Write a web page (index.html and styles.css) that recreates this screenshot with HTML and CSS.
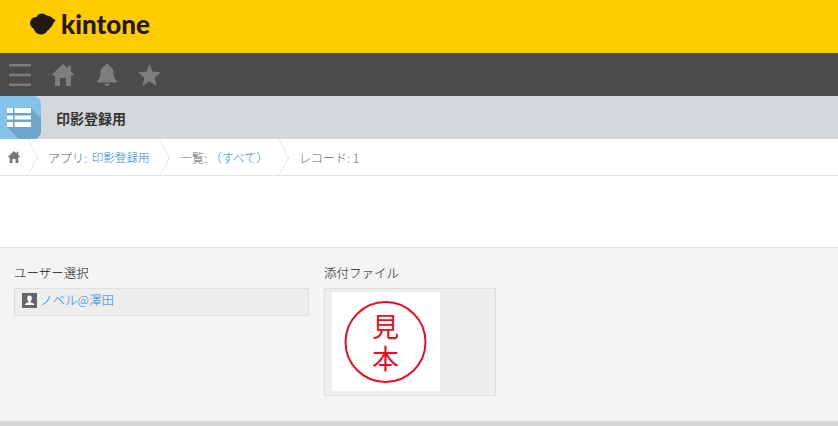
FILE: index.html
```html
<!DOCTYPE html>
<html lang="ja">
<head>
<meta charset="utf-8">
<title>印影登録用</title>
<link rel="stylesheet" href="styles.css">
</head>
<body>
<header class="brand">
  <svg class="cloud" width="26" height="22" viewBox="0 0 26 22"><g fill="#231815"><circle cx="6" cy="10" r="6"/><circle cx="12" cy="7" r="6.500"/><circle cx="17" cy="9" r="6.500"/><circle cx="11" cy="14" r="7.500"/><circle cx="15" cy="12" r="6"/><path d="M20 4l5.500 3-.5 1.500-5 3z"/></g></svg>
  <span class="wordmark">kintone</span>
</header>
<nav class="globalbar">
  <svg width="22" height="22" viewBox="0 0 22 22"><path fill="#7d7d7d" d="M0 0h22v2.500H0zM0 9.700h22v2.500H0zM0 19.500h22V22H0z"/></svg>
  <svg class="home" width="22" height="22" viewBox="0 0 22 22"><path fill="#7d7d7d" d="M11 0l5 4.600V1.500h3v6l3 3-1.200 1.200H19V22h-5v-8H8v8H3V11.700H1.200L0 10.500z"/></svg>
  <svg class="bell" width="22" height="22" viewBox="0 0 22 22"><path fill="#7d7d7d" d="M11 0c1 0 1.700.7 1.700 1.700 3.300.8 4.800 3.300 4.800 6.800 0 4 1 6.500 3.500 8.500v1.500H1V17c2.500-2 3.500-4.500 3.500-8.500 0-3.500 1.500-6 4.800-6.800C9.300.7 10 0 11 0zM8.500 19.700h5C13.500 21 12.400 22 11 22s-2.500-1-2.500-2.300z"/></svg>
  <svg class="star" width="23" height="22" viewBox="0 0 23 22"><path fill="#7d7d7d" d="M11.500 0l3.100 7.600 8.400.7-6.400 5.400 2 8.300-7.100-4.500L4.400 22l2-8.300L0 8.300l8.400-.7z"/></svg>
</nav>
<section class="apptitle">
  <div class="appicon">
    <svg width="41" height="43" viewBox="0 0 41 43">
      <path fill="#6fa4cb" d="M7 31V12h24l10 10v21H19z"/>
      <path fill="#fff" d="M7 12h6v5H7zM14.500 12H31v5H14.500zM7 19.500h6v4H7zM14.500 19.500H31v4H14.500zM7 26h6v5H7zM14.500 26H31v5H14.500z"/>
    </svg>
  </div>
  <h1 class="appname">印影登録用</h1>
</section>
<div class="crumbs">
  <a class="crumb crumb-home"><svg width="12" height="12" viewBox="0 0 12 12"><path fill="#777" d="M6 0l2.700 2.500V.8h1.600v3.300L12 5.800l-.7.7h-1V12H7.500V8h-3v4H1.700V6.500h-1L0 5.800z"/></svg></a>
  <span class="crumb">アプリ: <span class="link">印影登録用</span></span>
  <span class="crumb">一覧: <span class="link">（すべて）</span></span>
  <span class="crumb crumb-last">レコード: 1</span>
</div>
<div class="toolbar"></div>
<main class="record">
  <div class="field field-user">
    <div class="label">ユーザー選択</div>
    <div class="value value-user">
      <span class="avatar"><svg width="15" height="15" viewBox="0 0 15 15"><path fill="#666" d="M0 0h15v15H0z"/><path fill="#fff" d="M7.500 2.500c1.500 0 2.300 1.100 2.300 2.700 0 1.300-.6 2.300-1.200 2.900v1.200c1 .6 2.800.8 3.400 1.700v1H3v-1c.6-.9 2.400-1.100 3.400-1.700V8.100c-.6-.6-1.200-1.600-1.200-2.900 0-1.600.8-2.700 2.300-2.700z"/></svg></span>
      <span class="link">ノベル@澤田</span>
    </div>
  </div>
  <div class="field field-file">
    <div class="label">添付ファイル</div>
    <div class="value value-file">
      <div class="thumb">
        <svg width="108" height="99" viewBox="0 0 108 99">
          <circle cx="53.500" cy="50" r="40" fill="none" stroke="#e60f25" stroke-width="2"/>
          <text class="seal" x="53.500" y="45" text-anchor="middle">見</text>
          <text class="seal" x="53.500" y="77" text-anchor="middle">本</text>
        </svg>
      </div>
    </div>
  </div>
</main>
<footer class="bottomstrip"></footer>
</body>
</html>
```
FILE: styles.css
```css
* { box-sizing: border-box; }
html, body { margin: 0; padding: 0; }
body {
  width: 838px;
  height: 426px;
  overflow: hidden;
  display: flex;
  flex-direction: column;
  font-family: "Noto Sans CJK JP", "Liberation Sans", sans-serif;
  font-size: 12px;
  font-weight: 300;
  color: #222;
  background: #fff;
}
.brand {
  height: 53px;
  flex: none;
  background: #ffcc00;
  display: flex;
  align-items: center;
  gap: 5px;
  padding: 0 0 5px 30px;
}
.wordmark {
  font-family: Lato, sans-serif;
  font-weight: 900;
  font-size: 26px;
  line-height: 30px;
  color: #231815;
}
.globalbar {
  height: 43px;
  flex: none;
  background: #4b4b4b;
  display: flex;
  align-items: center;
  padding-left: 9px;
}
.globalbar .home { margin-left: 21px; }
.globalbar .bell { margin-left: 22px; }
.globalbar .star { margin-left: 20px; }
.apptitle {
  height: 43px;
  flex: none;
  background: #d4d8da;
  display: flex;
  align-items: center;
}
.appicon {
  width: 41px;
  height: 43px;
  background: #83c3ea;
  border-radius: 0 8px 8px 0;
  overflow: hidden;
}
.appicon svg { display: block; }
.appname {
  margin: 0 0 0 15px;
  font-size: 14px;
  font-weight: 700;
  color: #333;
}
.crumbs {
  height: 37px;
  flex: none;
  display: flex;
  align-items: stretch;
  border-bottom: 1px solid #e3e3e3;
  background: #fff;
}
.crumb {
  position: relative;
  display: flex;
  align-items: center;
  white-space: pre;
  color: #666;
  padding-right: 28px;
}
.crumb::after {
  content: "";
  position: absolute;
  right: 7px;
  top: 5px;
  width: 26px;
  height: 26px;
  border-top: 1px solid #dcdcdc;
  border-right: 1px solid #dcdcdc;
  transform: scaleX(0.55) rotate(45deg);
}
.crumb-last::after { display: none; }
.crumb-home { width: 48px; padding: 0 0 0 8px; }
.crumb:nth-child(2) { width: 132px; }
.crumb:nth-child(2) .link { font-size: 11.600px; margin-left: 2px; }
.crumb:nth-child(3) { width: 119px; }
.link { color: #1f86d8; }
.toolbar {
  height: 71px;
  flex: none;
  background: #fff;
}
.record {
  height: 174px;
  flex: none;
  background: #f4f4f4;
  border-top: 1px solid #e3e3e3;
  display: flex;
  gap: 15px;
  padding: 17px 0 0 14px;
}
.label {
  height: 23px;
  line-height: 16px;
  font-size: 12.500px;
  color: #111;
}
.value {
  background: #eeeeee;
  border: 1px solid #dedede;
}
.field-user { width: 295px; }
.value-user {
  height: 28px;
  display: flex;
  gap: 3px;
  padding: 3px 0 0 7px;
  line-height: 15px;
  font-size: 12.500px;
}
.avatar { padding-top: 1px; }
.avatar svg { display: block; }
.value-file {
  width: 172px;
  height: 108px;
  padding: 3px 0 0 7px;
}
.thumb {
  width: 108px;
  height: 99px;
  background: #fff;
}
.thumb svg { display: block; }
.seal {
  font-family: "Liberation Sans", "Noto Sans CJK JP", sans-serif;
  font-size: 27px;
  font-weight: 400;
  fill: #e60f25;
}
.bottomstrip {
  height: 5px;
  flex: none;
  background: #d6d6d6;
}
```
